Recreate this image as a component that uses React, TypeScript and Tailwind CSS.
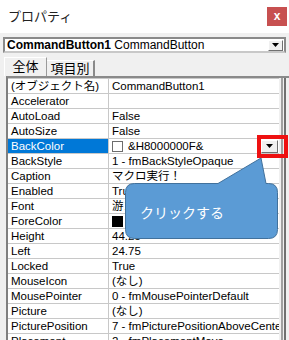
import React from "react";

type Row = { name: string; value: string; swatch?: "white" | "black"; selected?: boolean };

const rows: Row[] = [
    { name: "(オブジェクト名)", value: "CommandButton1" },
    { name: "Accelerator", value: "" },
    { name: "AutoLoad", value: "False" },
    { name: "AutoSize", value: "False" },
    { name: "BackColor", value: "&H8000000F&", swatch: "white", selected: true },
    { name: "BackStyle", value: "1 - fmBackStyleOpaque" },
    { name: "Caption", value: "マクロ実行！" },
    { name: "Enabled", value: "True" },
    { name: "Font", value: "游ゴシック" },
    { name: "ForeColor", value: "", swatch: "black" },
    { name: "Height", value: "44.25" },
    { name: "Left", value: "24.75" },
    { name: "Locked", value: "True" },
    { name: "MouseIcon", value: "(なし)" },
    { name: "MousePointer", value: "0 - fmMousePointerDefault" },
    { name: "Picture", value: "(なし)" },
    { name: "PicturePosition", value: "7 - fmPicturePositionAboveCenter" },
    { name: "Placement", value: "2 - fmPlacementMove" },
];

function DropArrow() {
    return (
        <svg width="7" height="4" viewBox="0 0 7 4">
            <path d="M0 0 H7 L3.5 4 Z" fill="#000" />
        </svg>
    );
}

function PropertyRow({ row }: { row: Row }) {
    return (
        <div className="flex h-[15px] border-b border-[#c8c8c8] shrink-0">
            <div
                className={
                    row.selected
                        ? "w-[101px] shrink-0 border-r border-[#c8c8c8] bg-[#0078d7] text-white pl-[3px] leading-[14px]"
                        : "w-[101px] shrink-0 border-r border-[#c8c8c8] pl-[3px] leading-[14px]"
                }
            >
                {row.name}
            </div>
            <div className="flex flex-1 items-center min-w-0 pl-[3px] whitespace-nowrap overflow-hidden leading-[14px]">
                {row.swatch === "white" && <span className="w-[11px] h-[11px] border border-[#6d6d6d] bg-white mr-[5px] shrink-0" />}
                {row.swatch === "black" && <span className="w-[11px] h-[11px] bg-black mr-[5px] shrink-0" />}
                <span>{row.value}</span>
                {row.selected && (
                    <span className="ml-auto mr-[1px] w-[17px] h-[13px] flex items-center justify-center bg-[#f0f0f0] border border-t-white border-l-white border-b-[#707070] border-r-[#707070] shrink-0">
                        <DropArrow />
                    </span>
                )}
            </div>
        </div>
    );
}

export default function App() {
    return (
        <div className="relative w-[289px] h-[340px] overflow-hidden bg-[#f0f0f0] text-black text-[11.5px] font-['Liberation_Sans','Noto_Sans_CJK_JP',sans-serif]">
            {/* title bar */}
            <div className="flex h-[33px] items-center justify-between bg-white">
                <p className="pl-[8px] text-[13px] text-[#222]">プロパティ</p>
                <div className="mr-[2px] mb-[1px] flex h-[19px] w-[20px] items-center justify-center bg-[#c75050] text-[12px] font-bold text-white leading-none">x</div>
            </div>

            {/* object combobox */}
            <div className="mx-[3px] mt-[4px] flex h-[16px] items-center border-2 border-[#8a8a8a] border-b-[#c8c8c8] border-r-[#8a8a8a] bg-white">
                <p className="pl-[2px] whitespace-nowrap text-[12px] leading-[12px]">
                    <span className="font-bold">CommandButton1</span> CommandButton
                </p>
                <span className="ml-auto mr-[1px] flex h-[11px] w-[15px] items-center justify-center border border-t-white border-l-white border-b-[#707070] border-r-[#707070] bg-[#f0f0f0]">
                    <DropArrow />
                </span>
            </div>

            {/* tabs */}
            <div className="ml-[4px] mt-[4px] flex h-[19px] items-end text-[13px]">
                <div className="flex h-[19px] w-[43px] items-center justify-center border-l border-t border-white border-r border-r-[#9a9a9a] pb-[1px]">全体</div>
                <div className="flex h-[16px] w-[48px] items-center justify-center border-t border-white border-r-2 border-r-[#8a8a8a]">項目別</div>
            </div>

            {/* grid */}
            <div className="ml-[6px] flex h-[270px] border-l-2 border-t-2 border-[#8a8a8a] border-l-[#808080]">
                <div className="flex w-[271px] flex-col border-t border-[#c8c8c8] bg-white">
                    {rows.map((row) => (
                        <PropertyRow key={row.name} row={row} />
                    ))}
                </div>
                <div className="ml-[2px] w-[8px] border-l-2 border-[#a0a0a0]">
                    <div className="ml-[1px] h-full w-[3px] border-l-2 border-[#707070]" />
                </div>
            </div>

            {/* highlight box */}
            <div className="absolute left-[257px] top-[135px] h-[23px] w-[31px] border-[4px] border-[#ee1111]" />

            {/* callout */}
            <svg className="pointer-events-none absolute left-0 top-0" width="289" height="340" viewBox="0 0 289 340">
                <path
                    d="M134.5 183.5 H218 L261 158 L266 183.5 H268.5 Q277.5 183.5 277.5 192.5 V229.5 Q277.5 238.5 268.5 238.5 H134.5 Q125.5 238.5 125.5 229.5 V192.5 Q125.5 183.5 134.5 183.5 Z"
                    fill="#5b9bd5"
                    stroke="#41719c"
                    strokeWidth="1"
                />
            </svg>
            <p className="absolute left-[140px] top-[203px] text-[14px] leading-[18px] text-white font-['Noto_Sans_CJK_JP',sans-serif]">クリックする</p>
        </div>
    );
}
